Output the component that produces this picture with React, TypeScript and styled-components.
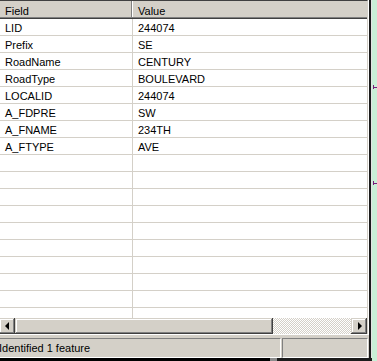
import React from "react";
import styled, { createGlobalStyle } from "styled-components";

const Global = createGlobalStyle`
  html, body { margin: 0; padding: 0; }
  body {
    width: 377px;
    height: 361px;
    overflow: hidden;
    background: #c9efd6;
    font-family: "Liberation Sans", Arial, sans-serif;
    font-size: 11px;
    color: #000;
  }
`;

const Desktop = styled.div`
  position: relative;
  width: 377px;
  height: 361px;
  overflow: hidden;
  background: #c9efd6;
  display: flex;
  flex-direction: column;
`;

const Main = styled.div`
  display: flex;
  height: 358px;
`;

const Frame = styled.div`
  margin-left: -1px;
  width: 370px;
  display: flex;
  flex-direction: column;
  background: #d4d0c8;
  border-right: 2px solid #1c1c1c;
  box-shadow: 1px 0 0 #e4e4e4;
`;

const List = styled.div`
  height: 335px;
  box-sizing: border-box;
  border-right: 1px solid #ffffff;
  border-bottom: 1px solid #ffffff;
  display: flex;
  flex-direction: column;
`;

const ListInner = styled.div`
  flex: 1;
  display: flex;
  flex-direction: column;
  border-top: 1px solid #404040;
  border-right: 1px solid #d4d0c8;
  background: #ffffff;
  min-height: 0;
`;

const Header = styled.div`
  display: flex;
  height: 18px;
  box-sizing: border-box;
  background: #d4d0c8;
  border-bottom: 1px solid #404040;
  box-shadow: inset 0 -1px 0 #808080;
`;

const HeadCell = styled.div<{ $w?: number; $first?: boolean }>`
  ${(p) => (p.$w ? `width: ${p.$w}px;` : "flex: 1;")}
  box-sizing: border-box;
  height: 16px;
  padding: 4px 0 0 ${(p) => (p.$first ? 6 : 5)}px;
  line-height: 12px;
  white-space: nowrap;
  ${(p) => (p.$first ? "border-right: 1px solid #808080;" : "border-left: 1px solid #ffffff;")}
`;

const Rows = styled.div`
  flex: 1;
  overflow: hidden;
  min-height: 0;
`;

const Row = styled.div`
  display: flex;
  height: 17px;
  box-sizing: border-box;
  border-bottom: 1px solid #d4d0c8;
`;

const Cell = styled.div<{ $w?: number; $first?: boolean }>`
  ${(p) => (p.$w ? `width: ${p.$w}px;` : "flex: 1;")}
  box-sizing: border-box;
  height: 16px;
  padding: 3px 0 0 ${(p) => (p.$first ? 6 : 5)}px;
  line-height: 13px;
  white-space: nowrap;
  overflow: hidden;
  ${(p) => (p.$first ? "border-right: 1px solid #d4d0c8;" : "")}
`;

const ScrollBar = styled.div`
  display: flex;
  height: 16px;
  background: #d4d0c8;
`;

const bevel = `
  box-shadow: inset -1px -1px 0 #404040, inset 1px 1px 0 #d4d0c8,
    inset -2px -2px 0 #808080, inset 2px 2px 0 #ffffff;
  background: #d4d0c8;
`;

const ArrowButton = styled.div`
  width: 16px;
  height: 16px;
  flex: none;
  display: flex;
  align-items: center;
  justify-content: center;
  ${bevel}
`;

const Arrow = styled.span<{ $dir: "left" | "right" }>`
  width: 0;
  height: 0;
  border-top: 4px solid transparent;
  border-bottom: 4px solid transparent;
  ${(p) =>
    p.$dir === "left"
      ? "border-right: 4px solid #000; margin-right: 1px;"
      : "border-left: 4px solid #000; margin-left: 1px;"}
`;

const Thumb = styled.div`
  width: 258px;
  flex: none;
  height: 16px;
  ${bevel}
`;

const Track = styled.div`
  flex: 1;
  height: 16px;
  background-color: #d4d0c8;
  background-image: repeating-conic-gradient(#ffffff 0 25%, #d4d0c8 0 50%);
  background-size: 2px 2px;
`;

const StatusBar = styled.div`
  display: flex;
  gap: 1px;
  padding-top: 3px;
  height: 23px;
  box-sizing: border-box;
`;

const Panel = styled.div<{ $w: number }>`
  width: ${(p) => p.$w}px;
  box-sizing: border-box;
  height: 20px;
  border-top: 1px solid #808080;
  border-right: 1px solid #ffffff;
  border-bottom: 1px solid #ffffff;
  padding: 3px 0 0 0;
  line-height: 13px;
  white-space: nowrap;
  overflow: hidden;
`;

const PanelRight = styled(Panel)`
  border-left: 1px solid #808080;
`;

const BottomEdge = styled.div`
  display: flex;
  height: 3px;
`;

const EdgePiece = styled.div<{ $w?: number; $c: string }>`
  ${(p) => (p.$w ? `width: ${p.$w}px;` : "flex: 1;")}
  background: ${(p) => p.$c};
`;

const MapMark = styled.div<{ $x: number; $y: number }>`
  position: absolute;
  left: ${(p) => p.$x}px;
  top: ${(p) => p.$y}px;
  width: 5px;
  height: 1px;
  background: #7a1a7a;
  &::before {
    content: "";
    position: absolute;
    left: 0;
    top: -2px;
    width: 1px;
    height: 4px;
    background: #7a1a7a;
  }
`;

const data: [string, string][] = [
  ["LID", "244074"],
  ["Prefix", "SE"],
  ["RoadName", "CENTURY"],
  ["RoadType", "BOULEVARD"],
  ["LOCALID", "244074"],
  ["A_FDPRE", "SW"],
  ["A_FNAME", "234TH"],
  ["A_FTYPE", "AVE"],
];

const rows: [string, string][] = [
  ...data,
  ...Array.from({ length: 10 }, () => ["", ""] as [string, string]),
];

export default function App() {
  return (
    <Desktop>
      <Global />
      <Main>
        <Frame>
          <List>
            <ListInner>
              <Header>
                <HeadCell $w={133} $first>
                  Field
                </HeadCell>
                <HeadCell>Value</HeadCell>
              </Header>
              <Rows>
                {rows.map(([f, v], i) => (
                  <Row key={i}>
                    <Cell $w={134} $first>
                      {f}
                    </Cell>
                    <Cell>{v}</Cell>
                  </Row>
                ))}
              </Rows>
              <ScrollBar>
                <ArrowButton>
                  <Arrow $dir="left" />
                </ArrowButton>
                <Thumb />
                <Track />
                <ArrowButton>
                  <Arrow $dir="right" />
                </ArrowButton>
              </ScrollBar>
            </ListInner>
          </List>
          <StatusBar>
            <Panel $w={282}>Identified 1 feature</Panel>
            <PanelRight $w={86} />
          </StatusBar>
        </Frame>
      </Main>
      <BottomEdge>
        <EdgePiece $w={270} $c="#000000" />
        <EdgePiece $w={7} $c="#8c8c8c" />
        <EdgePiece $w={95} $c="#1c1c1c" />
        <EdgePiece $c="#c9efd6" />
      </BottomEdge>
      <MapMark $x={373} $y={87} />
      <MapMark $x={373} $y={183} />
    </Desktop>
  );
}
